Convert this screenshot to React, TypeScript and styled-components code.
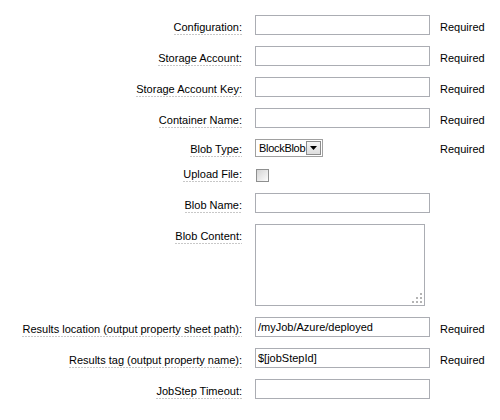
import React from "react";
import styled, { createGlobalStyle } from "styled-components";

const GlobalStyle = createGlobalStyle`
  html, body { background: #ffffff; }
  body {
    margin: 8px;
    font-family: "Liberation Sans", Arial, sans-serif;
    font-size: 11px;
    color: #000000;
  }
`;

const Form = styled.div`
  display: flex;
  flex-direction: column;
  gap: 11px;
  padding-top: 7px;
`;

const Row = styled.div`
  display: flex;
  align-items: flex-start;
`;

const LabelCell = styled.div<{ $h: number }>`
  width: 234px;
  height: ${(p) => p.$h}px;
  margin-right: 13px;
  display: flex;
  align-items: flex-end;
  justify-content: flex-end;
  flex: none;
`;

const Label = styled.span`
  white-space: nowrap;
  line-height: 14px;
  padding-bottom: 1px;
  background-image: repeating-linear-gradient(
    to right,
    #c8c8c8 0 2px,
    transparent 2px 3px
  );
  background-size: 100% 1px;
  background-repeat: no-repeat;
  background-position: left bottom;
`;

const FieldCell = styled.div<{ $h: number }>`
  width: 175px;
  height: ${(p) => p.$h}px;
  display: flex;
  align-items: center;
  flex: none;
`;

const TextInput = styled.input`
  box-sizing: border-box;
  width: 175px;
  height: 20px;
  margin: 0;
  padding: 0 2px;
  border: 1px solid #abadb3;
  font-family: inherit;
  font-size: 11px;
  color: #000;
  background: #fff;
  outline: none;
`;

const AreaWrap = styled.div`
  position: relative;
  width: 170px;
  height: 82px;
`;

const TextArea = styled.textarea`
  box-sizing: border-box;
  width: 170px;
  height: 82px;
  margin: 0;
  padding: 2px;
  border: 1px solid #abadb3;
  resize: none;
  font-family: inherit;
  font-size: 11px;
  outline: none;
  display: block;
`;

const Grip = styled.svg`
  position: absolute;
  right: 3px;
  bottom: 3px;
  pointer-events: none;
`;

const SelectBox = styled.div`
  box-sizing: border-box;
  width: 68px;
  height: 18px;
  border: 1px solid #a0a0a0;
  display: flex;
  align-items: stretch;
  background: #fff;
`;

const SelectText = styled.span`
  flex: 1;
  padding-left: 3px;
  line-height: 16px;
  letter-spacing: -0.3px;
  white-space: nowrap;
`;

const DropButton = styled.span`
  box-sizing: border-box;
  width: 15px;
  margin: 1px;
  border: 1px solid #8c8c8c;
  background: linear-gradient(#f6f6f6, #dedede);
  display: flex;
  align-items: center;
  justify-content: center;
`;

const CheckBox = styled.span`
  box-sizing: border-box;
  width: 13px;
  height: 13px;
  margin-left: 1px;
  border: 1px solid #8e8f8f;
  background: linear-gradient(135deg, #d4d4d4 0%, #f4f4f4 80%, #ffffff 100%);
`;

const Note = styled.div<{ $h: number }>`
  height: ${(p) => p.$h}px;
  margin-left: 10px;
  display: flex;
  align-items: flex-end;
  line-height: 14px;
  padding-bottom: 1px;
  box-sizing: border-box;
  white-space: nowrap;
`;

type Field =
  | { kind: "input"; label: string; value?: string; required?: boolean }
  | { kind: "select"; label: string; value: string; required?: boolean }
  | { kind: "checkbox"; label: string }
  | { kind: "textarea"; label: string };

const fields: Field[] = [
  { kind: "input", label: "Configuration:", required: true },
  { kind: "input", label: "Storage Account:", required: true },
  { kind: "input", label: "Storage Account Key:", required: true },
  { kind: "input", label: "Container Name:", required: true },
  { kind: "select", label: "Blob Type:", value: "BlockBlob", required: true },
  { kind: "checkbox", label: "Upload File:" },
  { kind: "input", label: "Blob Name:" },
  { kind: "textarea", label: "Blob Content:" },
  {
    kind: "input",
    label: "Results location (output property sheet path):",
    value: "/myJob/Azure/deployed",
    required: true,
  },
  {
    kind: "input",
    label: "Results tag (output property name):",
    value: "$[jobStepId]",
    required: true,
  },
  { kind: "input", label: "JobStep Timeout:" },
];

function heightOf(f: Field): number {
  switch (f.kind) {
    case "select":
      return 18;
    case "checkbox":
      return 14;
    case "textarea":
      return 82;
    default:
      return 20;
  }
}

function Control({ f }: { f: Field }) {
  if (f.kind === "input")
    return <TextInput type="text" defaultValue={f.value ?? ""} />;
  if (f.kind === "select")
    return (
      <SelectBox>
        <SelectText>{f.value}</SelectText>
        <DropButton>
          <svg width="7" height="4" viewBox="0 0 7 4">
            <path d="M0 0H7L3.5 4Z" fill="#000" />
          </svg>
        </DropButton>
      </SelectBox>
    );
  if (f.kind === "checkbox") return <CheckBox />;
  return (
    <AreaWrap>
      <TextArea />
      <Grip width="10" height="10" viewBox="0 0 10 10">
        <rect x="8" y="0" width="2" height="2" fill="#b4b4b4" />
        <rect x="4" y="4" width="2" height="2" fill="#b4b4b4" />
        <rect x="8" y="4" width="2" height="2" fill="#b4b4b4" />
        <rect x="0" y="8" width="2" height="2" fill="#b4b4b4" />
        <rect x="4" y="8" width="2" height="2" fill="#b4b4b4" />
        <rect x="8" y="8" width="2" height="2" fill="#b4b4b4" />
      </Grip>
    </AreaWrap>
  );
}

export default function App() {
  return (
    <>
      <GlobalStyle />
      <Form>
        {fields.map((f) => {
          const h = heightOf(f);
          const lh = f.kind === "textarea" ? 20 : h;
          const required = "required" in f && f.required;
          return (
            <Row key={f.label}>
              <LabelCell $h={lh}>
                <Label>{f.label}</Label>
              </LabelCell>
              <FieldCell $h={h}>
                <Control f={f} />
              </FieldCell>
              {required && <Note $h={h}>Required</Note>}
            </Row>
          );
        })}
      </Form>
    </>
  );
}
